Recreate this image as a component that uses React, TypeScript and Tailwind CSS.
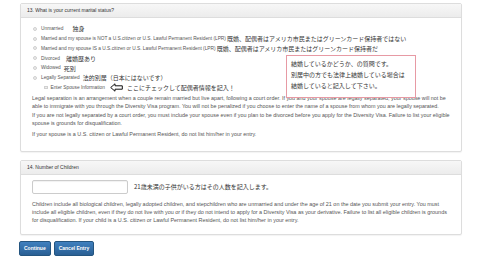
const jp = "font-['Noto_Sans_CJK_JP',sans-serif] text-[6px] text-[#333]";

function Radio({ label, note, noteClass }: { label: string; note?: string; noteClass?: string }) {
	return (
		<div className="flex items-center h-[9.8px]">
			<span className="w-[4px] h-[4px] rounded-full border-[0.5px] border-[#d0d0d0] bg-[#ececec] mr-[4px] shrink-0" />
			<span className="whitespace-nowrap text-[4.8px]">{label}</span>
			{note && <span className={`${jp} whitespace-nowrap ${noteClass ?? 'ml-[3px]'}`}>{note}</span>}
		</div>
	);
}

function ArrowLeft() {
	return (
		<svg width="13" height="9" viewBox="0 0 13 9" className="shrink-0">
			<path d="M0.7 4.5 L5 0.8 L5 2.8 L12.3 2.8 L12.3 6.2 L5 6.2 L5 8.2 Z" fill="white" stroke="#111" strokeWidth="1" strokeLinejoin="miter" />
		</svg>
	);
}

function Panel({ title, children, className }: { title: string; children: React.ReactNode; className?: string }) {
	return (
		<div className={`relative w-[442px] border border-[#ddd] rounded-[2px] bg-white shadow-[0_1px_1px_rgba(0,0,0,0.05)] ${className ?? ''}`}>
			<div className="h-[14px] flex items-center px-[6px] bg-gradient-to-b from-[#f7f7f7] to-[#ececec] border-b border-[#ddd] text-[#333]">
				{title}
			</div>
			{children}
		</div>
	);
}

export default function App() {
	return (
		<div className="w-[480px] h-[259px] bg-white font-['Liberation_Sans',Arial,sans-serif] text-[5px] text-[#555] pl-[20px] pt-[3px] overflow-hidden">
			<Panel title="13. What is your current marital status?">
				<div className="px-[11px] pt-[6px] pb-[13px]">
					<div className="pl-[1px]">
						<Radio label="Unmarried" note="独身" noteClass="ml-[9px] text-[6.5px]" />
						<Radio label="Married and my spouse is NOT a U.S.citizen or U.S. Lawful Permanent Resident (LPR)" note="既婚、配偶者はアメリカ市民またはグリーンカード保持者ではない" noteClass="ml-[1px]" />
						<Radio label="Married and my spouse IS a U.S.citizen or U.S. Lawful Permanent Resident (LPR)" note="既婚、配偶者はアメリカ市民またはグリーンカード保持者だ" noteClass="ml-[1px]" />
						<Radio label="Divorced" note="離婚歴あり" noteClass="ml-[6px]" />
						<Radio label="Widowed" note="死別" noteClass="ml-[3px]" />
						<Radio label="Legally Separated" note="法的別居（日本にはないです）" noteClass="ml-[3px]" />
						<div className="flex items-center h-[9px] pl-[11px]">
							<span className="w-[3.5px] h-[3.5px] border-[0.5px] border-[#d0d0d0] bg-[#ececec] mr-[3px] shrink-0" />
							<span className="whitespace-nowrap text-[4.8px]">Enter Spouse Information</span>
							<span className="ml-[5px] mr-[4px] flex items-center"><ArrowLeft /></span>
							<span className={`${jp} whitespace-nowrap`}>ここにチェックして配偶者情報を記入！</span>
						</div>
					</div>
					<div className="text-[5.4px] -mr-[1px]">
						<p className="leading-[8px] mt-[2px]">
							Legal separation is an arrangement when a couple remain married but live apart, following a court order. If you and your spouse are legally separated, your spouse will not be able to immigrate with you through the Diversity Visa program. You will not be penalized if you choose to enter the name of a spouse from whom you are legally separated.
						</p>
						<p className="leading-[8px] mt-[1px]">
							If you are not legally separated by a court order, you must include your spouse even if you plan to be divorced before you apply for the Diversity Visa. Failure to list your eligible spouse is grounds for disqualification.
						</p>
						<p className="leading-[8px] mt-[3px]">
							If your spouse is a U.S. citizen or Lawful Permanent Resident, do not list him/her in your entry.
						</p>
					</div>
				</div>
				<div className="absolute left-[265px] top-[51px] w-[130px] h-[43px] border border-[#e79aa4] bg-white px-[4px] pt-[2px]">
					<p className={`${jp} leading-[11px]`}>結婚しているかどうか、の質問です。</p>
					<p className={`${jp} leading-[11px]`}>別居中の方でも法律上結婚している場合は</p>
					<p className={`${jp} leading-[11px]`}>結婚していると記入して下さい。</p>
				</div>
			</Panel>

			<Panel title="14. Number of Children" className="mt-[8px]">
				<div className="px-[11px] pt-[5px] pb-[10px]">
					<div className="flex items-center">
						<div className="w-[96px] h-[14px] border border-[#ccc] rounded-[2px] bg-white shadow-[inset_0_1px_1px_rgba(0,0,0,0.06)]" />
						<span className={`${jp} ml-[6px] whitespace-nowrap`}>21歳未満の子供がいる方はその人数を記入します。</span>
					</div>
					<p className="leading-[8px] mt-[6px] text-[5.45px] pr-[1px]">
						Children include all biological children, legally adopted children, and stepchildren who are unmarried and under the age of 21 on the date you submit your entry. You must include all eligible children, even if they do not live with you or if they do not intend to apply for a Diversity Visa as your derivative. Failure to list all eligible children is grounds for disqualification. If your child is a U.S. citizen or Lawful Permanent Resident, do not list him/her in your entry.
					</p>
				</div>
			</Panel>

			<div className="flex gap-[3px] mt-[6px] -ml-[1px]">
				<button className="h-[15px] px-[4px] rounded-[2px] border border-[#245580] bg-gradient-to-b from-[#3f80bf] to-[#2a5f94] text-white text-[5px] font-bold">Continue</button>
				<button className="h-[15px] px-[4px] rounded-[2px] border border-[#245580] bg-gradient-to-b from-[#3f80bf] to-[#2a5f94] text-white text-[5px] font-bold">Cancel Entry</button>
			</div>
		</div>
	);
}
